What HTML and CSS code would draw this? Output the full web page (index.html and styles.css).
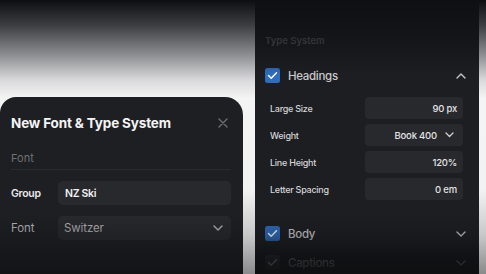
FILE: index.html
```html
<!DOCTYPE html>
<html>
<head>
<meta charset="utf-8">
<link rel="stylesheet" href="styles.css">
</head>
<body>
<div class="stage">
  <section class="dialog">
    <header class="dialog-head">
      <h1 class="dialog-title">New Font &amp; Type System</h1>
      <svg class="close" width="10" height="10" viewBox="0 0 10 10"><path d="M1 1L9 9M9 1L1 9" stroke="#6c6d71" stroke-width="1.4" stroke-linecap="round"/></svg>
    </header>
    <div class="section-label">Font</div>
    <div class="divider"></div>
    <div class="form-row">
      <span class="form-label strong">Group</span>
      <div class="field strong">NZ Ski</div>
    </div>
    <div class="form-row">
      <span class="form-label">Font</span>
      <div class="field select">Switzer
        <svg width="10" height="6" viewBox="0 0 10 6"><path d="M1 1L5 5L9 1" fill="none" stroke="#b8b9bc" stroke-width="1.4" stroke-linecap="round" stroke-linejoin="round"/></svg>
      </div>
    </div>
    <div class="fade"></div>
  </section>

  <aside class="panel">
    <div class="panel-label">Type System</div>
    <div class="group-head">
      <span class="check"><svg width="11" height="9" viewBox="0 0 11 9"><path d="M1.5 4.5L4.2 7.2L9.5 1.8" fill="none" stroke="#fff" stroke-width="1.5" stroke-linecap="round" stroke-linejoin="round"/></svg></span>
      <span class="group-name">Headings</span>
      <svg class="chev" width="10" height="6" viewBox="0 0 10 6"><path d="M1 5L5 1L9 5" fill="none" stroke="#c4c5c8" stroke-width="1.4" stroke-linecap="round" stroke-linejoin="round"/></svg>
    </div>
    <div class="props">
      <span class="prop-label">Large Size</span><div class="prop-field">90 px</div>
      <span class="prop-label">Weight</span><div class="prop-field">Book 400<svg width="9" height="6" viewBox="0 0 9 6"><path d="M1 1L4.5 4.5L8 1" fill="none" stroke="#d0d1d3" stroke-width="1.3" stroke-linecap="round" stroke-linejoin="round"/></svg></div>
      <span class="prop-label">Line Height</span><div class="prop-field">120%</div>
      <span class="prop-label">Letter Spacing</span><div class="prop-field">0 em</div>
    </div>
    <div class="group-head body-row">
      <span class="check"><svg width="11" height="9" viewBox="0 0 11 9"><path d="M1.5 4.5L4.2 7.2L9.5 1.8" fill="none" stroke="#fff" stroke-width="1.5" stroke-linecap="round" stroke-linejoin="round"/></svg></span>
      <span class="group-name">Body</span>
      <svg class="chev" width="10" height="6" viewBox="0 0 10 6"><path d="M1 1L5 5L9 1" fill="none" stroke="#c4c5c8" stroke-width="1.4" stroke-linecap="round" stroke-linejoin="round"/></svg>
    </div>
    <div class="group-head captions-row">
      <span class="check gray"><svg width="11" height="9" viewBox="0 0 11 9"><path d="M1.5 4.5L4.2 7.2L9.5 1.8" fill="none" stroke="#fff" stroke-width="1.5" stroke-linecap="round" stroke-linejoin="round"/></svg></span>
      <span class="group-name">Captions</span>
      <svg class="chev" width="10" height="6" viewBox="0 0 10 6"><path d="M1 1L5 5L9 1" fill="none" stroke="#c4c5c8" stroke-width="1.4" stroke-linecap="round" stroke-linejoin="round"/></svg>
    </div>
    <div class="fade panel-fade"></div>
  </aside>
</div>
</body>
</html>
```

FILE: styles.css
```css
* { box-sizing: border-box; margin: 0; padding: 0; }
html, body { width: 486px; height: 274px; overflow: hidden; }
body {
  font-family: Inter, "Noto Sans", sans-serif;
  background: linear-gradient(to bottom, #0d0e10 0px, #3c3d40 25px, #8d8e91 55px, #d9d9db 80px, #f4f4f4 98px, #f2f2f2 190px, #c8c8c8 235px, #8a8a8a 274px);
}
.stage { display: flex; align-items: flex-start; height: 274px; }

.dialog {
  position: relative;
  width: 243px;
  height: 177px;
  margin-top: 97px;
  background: #1e1f22;
  border-radius: 16px 18px 0 0;
  padding: 0 12px 0 11px;
  overflow: hidden;
}
.dialog-head { display: flex; align-items: center; justify-content: space-between; height: 50px; padding-top: 1px; padding-right: 3px; }
.dialog-title { font-size: 13.5px; font-weight: 700; color: #f4f4f5; letter-spacing: -0.15px; }
.section-label { font-size: 11px; color: #6f7074; height: 22px; line-height: 22px; }
.divider { height: 1px; background: #2b2c2f; margin-bottom: 11px; }
.form-row { display: flex; align-items: center; height: 24px; margin-bottom: 11px; }
.form-label { width: 47px; font-size: 11.5px; color: #b9babd; letter-spacing: -0.1px; }
.form-label.strong { color: #ebebec; font-weight: 600; font-size: 10.5px; letter-spacing: -0.3px; }
.field {
  flex: 1; height: 24px; border-radius: 5px; background: #28292c;
  display: flex; align-items: center; padding: 0 8px 0 6px;
  font-size: 11.5px; color: #b4b5b8; letter-spacing: -0.1px;
}
.field.strong { color: #f0f0f1; font-weight: 600; font-size: 10.5px; letter-spacing: -0.3px; padding-left: 7px; }
.field.select { justify-content: space-between; padding-right: 8px; }

.fade { position: absolute; left: 0; right: 0; bottom: 0; height: 60px; pointer-events: none;
  background: linear-gradient(to bottom, rgba(15,16,18,0) 0, rgba(15,16,18,0.75) 100%); }

.panel {
  position: relative;
  width: 224px;
  height: 274px;
  margin-left: 12px;
  background: #1d1e21;
  padding: 0 16px 0 10px;
  overflow: hidden;
}
.panel-label { padding-top: 35px; height: 61px; font-size: 9.5px; font-weight: 600; color: #5d5e62; }
.group-head { display: flex; align-items: center; height: 29px; }
.check { width: 15px; height: 15px; border-radius: 2.5px; background: #2e6dbf; display: flex; align-items: center; justify-content: center; }
.check.gray { background: #3a3b3e; }
.group-name { flex: 1; margin-left: 8px; font-size: 11.5px; font-weight: 500; color: #c9cacd; letter-spacing: -0.3px; }
.chev { margin-right: -3px; }
.props {
  display: grid; grid-template-columns: 95px 1fr; row-gap: 5px;
  padding-left: 5px; margin-top: 7px;
}
.prop-label { font-size: 9px; font-weight: 500; color: #d4d5d7; align-self: center; letter-spacing: -0.25px; }
.prop-field {
  height: 22px; border-radius: 4px; background: #28292c;
  display: flex; align-items: center; justify-content: flex-end; gap: 8px;
  padding: 0 6px; font-size: 9.5px; font-weight: 500; color: #e2e3e5; letter-spacing: -0.2px;
}
.prop-field svg { margin-right: 3px; }
.body-row { margin-top: 19px; }
.captions-row { margin-top: 0px; }
.panel-fade { top: 0; height: auto;
  background: linear-gradient(to bottom, rgba(13,14,16,0.92) 0, rgba(13,14,16,0.55) 40px, rgba(13,14,16,0) 75px, rgba(13,14,16,0) 212px, rgba(13,14,16,0.25) 236px, rgba(13,14,16,0.82) 258px, rgba(13,14,16,0.92) 274px); }
```
